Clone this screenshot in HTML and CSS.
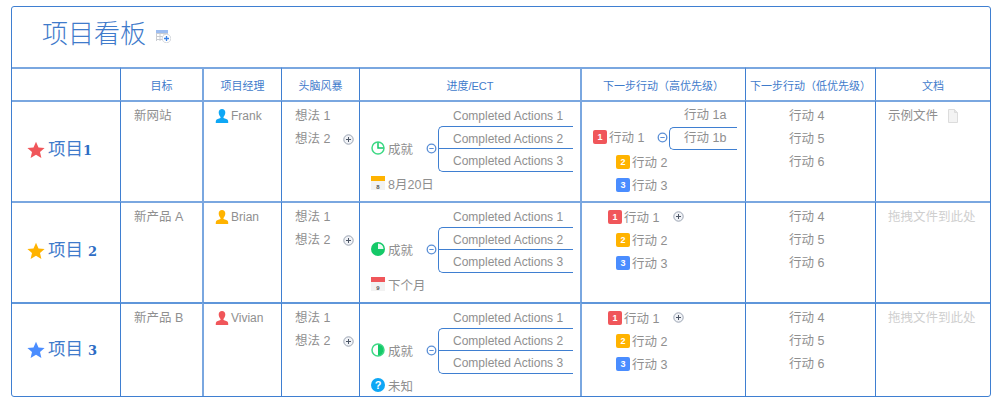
FILE: index.html
```html
<!DOCTYPE html>
<html lang="zh">
<head>
<meta charset="utf-8">
<title>项目看板</title>
<link rel="stylesheet" href="styles.css">
</head>
<body>
<svg class="defs" width="0" height="0" aria-hidden="true">
  <symbol id="star" viewBox="0 0 18 18"><path d="M9 .8l2.500 5.600 6.100.6-4.600 4 1.400 6L9 13.800 3.600 17l1.400-6-4.600-4 6.100-.6z"/></symbol>
  <symbol id="person" viewBox="0 0 14 14"><path d="M7 0c2 0 3.300 1.400 3.300 3.500 0 1.800-.9 3.500-1.800 4.400v1.100c1.700.5 4 1 4.500 2.500.3.800.2 2.500.2 2.500H.8s-.1-1.700.2-2.500c.5-1.500 2.800-2 4.500-2.500V7.900C4.600 7 3.700 5.300 3.700 3.500 3.700 1.400 5 0 7 0z"/></symbol>
  <symbol id="plus" viewBox="0 0 11 11"><circle cx="5.500" cy="5.500" r="4.700" fill="#f1f3f7" stroke="#9aa3b2"/><path d="M3 5.500h5M5.500 3v5" stroke="#4d5666" fill="none"/></symbol>
  <symbol id="minus" viewBox="0 0 11 11"><circle cx="5.500" cy="5.500" r="4.300" fill="#fff" stroke="#5b8fd6" stroke-width="1.300"/><path d="M3.300 5.500h4.400" stroke="#5b8fd6" fill="none"/></symbol>
</svg>
<main class="board">
  <header class="title-row">
    <h1 class="title">项目看板</h1>
    <svg class="title-icon" width="15" height="14" viewBox="0 0 15 14" aria-hidden="true">
      <rect x="0" y="1" width="12" height="3" fill="#9dbdf0"/>
      <path d="M0 4.500h12M0 7.500h12M0 10.500h12M4 4v8M8 4v8M.5 4v8" stroke="#c9ccd2" fill="none"/>
      <circle cx="10.500" cy="9.500" r="4.300" fill="#fff" stroke="#d4d7dc"/>
      <path d="M8 9.500h5M10.500 7v5" stroke="#3b82e6" stroke-width="1.300" fill="none"/>
    </svg>
  </header>
  <section class="grid">
    <div class="cell head first"></div>
    <div class="cell head">目标</div>
    <div class="cell head thick">项目经理</div>
    <div class="cell head">头脑风暴</div>
    <div class="cell head">进度/ECT</div>
    <div class="cell head thick">下一步行动（高优先级）</div>
    <div class="cell head">下一步行动（低优先级）</div>
    <div class="cell head">文档</div>

    <div class="cell project first row-a"><svg class="star red"><use href="#star"/></svg><span class="name">项目<span class="num">1</span></span></div>
    <div class="cell row-a"><p class="line goal">新网站</p></div>
    <div class="cell row-a thick"><p class="owner"><svg class="person cyan"><use href="#person"/></svg>Frank</p></div>
    <div class="cell row-a ideas"><p class="line">想法 1</p><p class="line has-plus">想法 2<svg class="plus"><use href="#plus"/></svg></p></div>
    <div class="cell row-a progress">
      <div class="map">
        <p class="done"><svg class="pie" viewBox="0 0 14 14"><circle cx="7" cy="7" r="6" fill="#fff" stroke="#3ed985" stroke-width="1.500"/><path d="M7 1.500V7h5.500" fill="none" stroke="#14c968" stroke-width="1.500"/></svg>成就</p>
        <svg class="toggle"><use href="#minus"/></svg>
        <ul class="branch"><li>Completed Actions 1</li><li>Completed Actions 2</li><li>Completed Actions 3</li></ul>
      </div>
      <p class="ect"><svg class="cal" viewBox="0 0 14 14"><rect y="0" width="14" height="14" fill="#f2f2f2"/><rect y="0" width="14" height="5" fill="#ffb300"/><text x="7" y="12.500" class="cal-day">8</text></svg>8月20日</p>
    </div>
    <div class="cell row-a thick high">
      <div class="act-top">
        <p class="act"><b class="pri p1">1</b>行动 1</p>
        <svg class="toggle"><use href="#minus"/></svg>
        <ul class="sub"><li>行动 1a</li><li>行动 1b</li></ul>
      </div>
      <p class="act second"><b class="pri p2">2</b>行动 2</p>
      <p class="act second"><b class="pri p3">3</b>行动 3</p>
    </div>
    <div class="cell row-a low"><p class="line">行动 4</p><p class="line">行动 5</p><p class="line">行动 6</p></div>
    <div class="cell row-a doc"><p class="line">示例文件<svg class="file" viewBox="0 0 11 14" width="11" height="14"><path d="M1.500.500h6l3 3v10h-9z" fill="#f3f3f3" stroke="#dcdcdc"/><path d="M7.500.500v3h3" fill="#e4e4e4" stroke="#dcdcdc"/></svg></p></div>

    <div class="cell project first row-b"><svg class="star amber"><use href="#star"/></svg><span class="name">项目 <span class="num">2</span></span></div>
    <div class="cell row-b"><p class="line goal">新产品 A</p></div>
    <div class="cell row-b thick"><p class="owner"><svg class="person amber"><use href="#person"/></svg>Brian</p></div>
    <div class="cell row-b ideas"><p class="line">想法 1</p><p class="line has-plus">想法 2<svg class="plus"><use href="#plus"/></svg></p></div>
    <div class="cell row-b progress">
      <div class="map">
        <p class="done"><svg class="pie" viewBox="0 0 14 14"><circle cx="7" cy="7" r="7" fill="#14c968"/><path d="M7 7V1.500A5.500 5.500 0 0 1 12.500 7z" fill="#e9fbf1"/></svg>成就</p>
        <svg class="toggle"><use href="#minus"/></svg>
        <ul class="branch"><li>Completed Actions 1</li><li>Completed Actions 2</li><li>Completed Actions 3</li></ul>
      </div>
      <p class="ect"><svg class="cal" viewBox="0 0 14 14"><rect y="0" width="14" height="14" fill="#f2f2f2"/><rect y="0" width="14" height="5" fill="#f0565a"/><text x="7" y="12.500" class="cal-day">9</text></svg>下个月</p>
    </div>
    <div class="cell row-b thick high">
      <p class="act plain"><b class="pri p1">1</b>行动 1<svg class="plus"><use href="#plus"/></svg></p>
      <p class="act second"><b class="pri p2">2</b>行动 2</p>
      <p class="act second"><b class="pri p3">3</b>行动 3</p>
    </div>
    <div class="cell row-b low"><p class="line">行动 4</p><p class="line">行动 5</p><p class="line">行动 6</p></div>
    <div class="cell row-b doc"><p class="line hint">拖拽文件到此处</p></div>

    <div class="cell project first row-c"><svg class="star blue"><use href="#star"/></svg><span class="name">项目 <span class="num">3</span></span></div>
    <div class="cell row-c"><p class="line goal">新产品 B</p></div>
    <div class="cell row-c thick"><p class="owner"><svg class="person red"><use href="#person"/></svg>Vivian</p></div>
    <div class="cell row-c ideas"><p class="line">想法 1</p><p class="line has-plus">想法 2<svg class="plus"><use href="#plus"/></svg></p></div>
    <div class="cell row-c progress">
      <div class="map">
        <p class="done"><svg class="pie" viewBox="0 0 14 14"><circle cx="7" cy="7" r="6" fill="#fff" stroke="#3ed985" stroke-width="1.500"/><path d="M7 1.500a5.500 5.500 0 0 1 0 11z" fill="#14c968"/></svg>成就</p>
        <svg class="toggle"><use href="#minus"/></svg>
        <ul class="branch"><li>Completed Actions 1</li><li>Completed Actions 2</li><li>Completed Actions 3</li></ul>
      </div>
      <p class="ect"><span class="unknown">?</span>未知</p>
    </div>
    <div class="cell row-c thick high">
      <p class="act plain"><b class="pri p1">1</b>行动 1<svg class="plus"><use href="#plus"/></svg></p>
      <p class="act second"><b class="pri p2">2</b>行动 2</p>
      <p class="act second"><b class="pri p3">3</b>行动 3</p>
    </div>
    <div class="cell row-c low"><p class="line">行动 4</p><p class="line">行动 5</p><p class="line">行动 6</p></div>
    <div class="cell row-c doc"><p class="line hint">拖拽文件到此处</p></div>
  </section>
</main>
</body>
</html>
```
FILE: styles.css
```css
* { box-sizing: border-box; }
html, body { margin: 0; padding: 0; background: #fff; }
body {
  padding: 6px 9px 0 11px;
  font-family: "Liberation Sans", "Noto Sans CJK SC", sans-serif;
  font-size: 12.500px;
  color: #8f8f8f;
}
p, ul, h1 { margin: 0; padding: 0; font-weight: normal; }
ul { list-style: none; }
.defs { position: absolute; }

.board {
  width: 980px;
  height: 391px;
  border: 1px solid #3f7fd1;
  border-radius: 3px;
  display: flex;
  flex-direction: column;
}
.title-row {
  height: 60px;
  padding: 12px 0 0 30px;
  display: flex;
  align-items: flex-start;
}
.title { font-size: 26px; line-height: 30px; color: #3f7bcb; font-weight: 300; }
.title-icon { margin: 10px 0 0 10px; }

.grid {
  flex: 1;
  display: grid;
  grid-template-columns: 108px 82px 79px 78px 221px 165px 130px 115px;
  grid-template-rows: 33px 101px 101px 1fr;
}
.cell {
  border-top: 2px solid #7aa7e0;
  border-left: 1px solid #3f7fd1;
  min-width: 0;
  padding: 3px 0 0 13px;
}
.cell.first { border-left: 0; }
.cell.thick { border-left: 2px solid #7aa7e0; }
.row-c { border-top-color: #5f96da; }

.head {
  padding: 0;
  display: flex;
  align-items: center;
  justify-content: center;
  font-size: 11px;
  color: #3f7bcb;
  white-space: nowrap;
}
.project {
  padding: 0 0 4px 15px;
  display: flex;
  align-items: center;
  gap: 3px;
}
.project.row-c { padding-bottom: 0; }
.star { width: 18px; height: 18px; flex: none; }
.red { fill: #f0565a; }
.amber { fill: #ffb300; }
.blue { fill: #4a8dff; }
.cyan { fill: #0ea7f5; }
.name { font-size: 17.500px; color: #3f7bcb; line-height: 24px; }
.num { font-family: "DejaVu Serif", serif; font-size: 13px; font-weight: bold; color: #2d6cc4; }

.line { line-height: 23px; white-space: nowrap; }
.owner { display: flex; align-items: center; gap: 2px; height: 18px; margin: 2px 0 0 -2px; font-size: 12px; }
.person { width: 14px; height: 14px; flex: none; }
.has-plus { display: flex; align-items: center; }
.plus { width: 11px; height: 11px; margin-left: 13px; flex: none; }

.progress { padding: 2px 0 0 11px; }
.map { display: flex; align-items: center; height: 68px; }
.done { display: flex; align-items: center; gap: 3px; width: 55px; margin-top: 20px; }
.pie { width: 14px; height: 14px; flex: none; }
.toggle { width: 11px; height: 11px; flex: none; margin-top: 20px; margin-right: 1px; }
.branch { width: 135px; font-size: 12px; }
.branch li { height: 22px; padding-left: 15px; line-height: 24px; white-space: nowrap; }
.branch li + li { height: 23px; border-left: 1px solid #3f7fd1; border-bottom: 1px solid #3f7fd1; padding-left: 14px; }
.branch li:nth-child(2) { border-top: 1px solid #3f7fd1; border-top-left-radius: 5px; }
.branch li:nth-child(3) { border-bottom-left-radius: 5px; line-height: 25px; }
.ect { display: flex; align-items: center; gap: 3px; height: 18px; margin-top: 2px; }
.cal { width: 14px; height: 14px; flex: none; }
.cal-day { font: bold 6px "Liberation Sans", sans-serif; fill: #555; text-anchor: middle; }
.unknown { width: 14px; height: 14px; border-radius: 50%; background: #0ea7f5; color: #fff; font: bold 11px/14px "Liberation Sans", sans-serif; text-align: center; flex: none; }

.high { padding: 0; }
.act { display: flex; align-items: center; gap: 2px; height: 23px; white-space: nowrap; }
.act .plus { margin-left: 12px; }
.pri { width: 14px; height: 14px; border-radius: 2px; color: #fff; font: bold 9px/14px "Liberation Sans", sans-serif; text-align: center; flex: none; }
.p1 { background: #f0565a; }
.p2 { background: #ffb300; }
.p3 { background: #4a8dff; }
.act.second { padding-left: 34px; }
.act.plain { padding-left: 26px; margin-top: 2px; }
.act-top { display: flex; align-items: center; height: 48px; padding-left: 11px; }
.act-top .act { width: 64px; margin-top: 21px; }
.act-top .toggle { margin-top: 22px; }
.sub { width: 68px; }
.sub li { height: 25px; line-height: 26px; padding-left: 15px; white-space: nowrap; }
.sub li + li { height: 23px; border: 1px solid #3f7fd1; border-right: 0; border-radius: 5px 0 0 5px; padding-left: 14px; line-height: 21px; }

.low { padding-left: 43px; }
.doc { padding-left: 12px; }
.doc .file { margin-left: 9px; vertical-align: -3px; }
.hint { color: #cfcfcf; }
```
